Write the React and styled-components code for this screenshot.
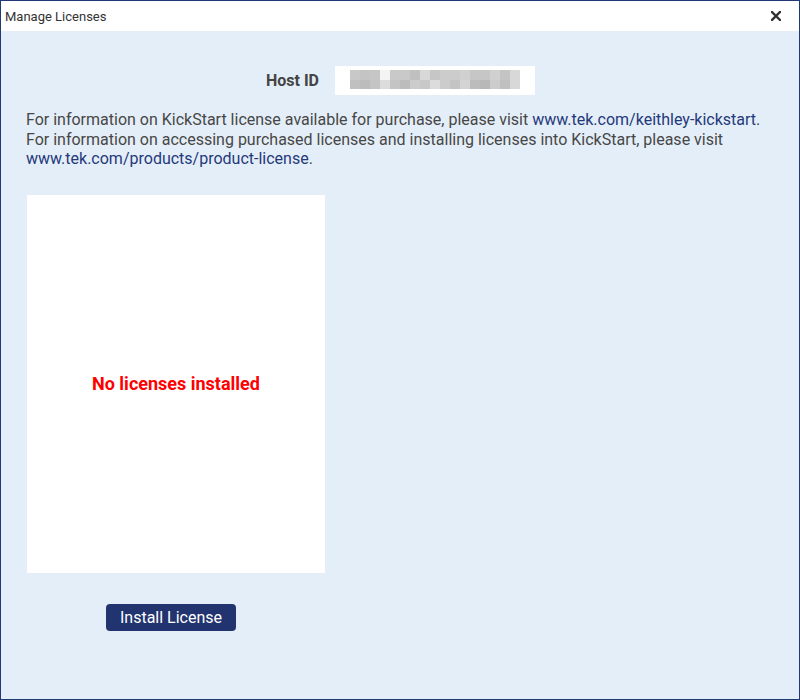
import React from 'react';
import styled, { createGlobalStyle } from 'styled-components';

const GlobalStyle = createGlobalStyle`
  html, body {
    margin: 0;
    padding: 0;
    background: #e4eef8;
  }
  * {
    box-sizing: border-box;
  }
`;

const Window = styled.div`
  width: 800px;
  height: 700px;
  border: 1px solid #203a78;
  display: flex;
  flex-direction: column;
  font-family: Roboto, 'Noto Sans', sans-serif;
  background: #e4eef8;
`;

const TitleBar = styled.div`
  height: 30px;
  flex: none;
  background: #ffffff;
  display: flex;
  align-items: center;
  justify-content: space-between;
  padding: 0 18px 0 4px;
`;

const Title = styled.span`
  font-size: 13px;
  color: #333333;
`;

const CloseButton = styled.button`
  border: 0;
  background: none;
  padding: 0;
  width: 10px;
  height: 10px;
  display: flex;
  cursor: pointer;
`;

const Body = styled.div`
  flex: 1;
  padding: 35px 25px 0 24px;
  display: flex;
  flex-direction: column;
`;

const HostRow = styled.div`
  display: flex;
  justify-content: center;
  align-items: center;
  gap: 16px;
  padding-left: 2px;
`;

const HostLabel = styled.span`
  font-size: 16px;
  font-weight: bold;
  color: #444444;
`;

const HostBox = styled.div`
  width: 200px;
  height: 29px;
  background: #ffffff;
  padding: 4px 0 0 15px;
`;

const Pixels = styled.div`
  display: grid;
  grid-template-columns: repeat(17, 10px);
  grid-auto-rows: 9.5px;
`;

const Pixel = styled.span`
  background: ${p => p.$shade};
`;

const Info = styled.p`
  margin: 15px 0 0 1px;
  font-size: 16px;
  line-height: 19.5px;
  color: #474747;
`;

const Link = styled.a`
  color: #24397a;
  text-decoration: none;
`;

const Column = styled.div`
  width: 298px;
  margin: 26px 0 0 2px;
  display: flex;
  flex-direction: column;
`;

const LicensePanel = styled.div`
  height: 378px;
  background: #ffffff;
  display: flex;
  align-items: center;
  justify-content: center;
`;

const Empty = styled.span`
  color: #ff0000;
  font-weight: bold;
  font-size: 18px;
`;

const InstallButton = styled.button`
  align-self: flex-start;
  margin: 31px 0 0 79px;
  width: 130px;
  height: 27px;
  border: 0;
  border-radius: 4px;
  background: #21346f;
  color: #ffffff;
  font-family: Roboto, 'Noto Sans', sans-serif;
  font-size: 16px;
  cursor: pointer;
`;

const shades = [
  'c8', 'c4', 'c6', 'f4', 'c9', 'c9', 'c0', 'd8', 'c6', 'cc', 'cc', 'd0', 'c6', 'c6', 'd0', 'c4', 'd8',
  'c0', 'bc', 'c4', 'dc', 'c4', 'bc', 'cc', 'c8', 'dc', 'cc', 'c4', 'd4', 'bc', 'b8', 'cc', 'c0', 'd8',
];

export default function App() {
  return (
    <>
      <GlobalStyle />
      <Window>
        <TitleBar>
          <Title>Manage Licenses</Title>
          <CloseButton aria-label="Close">
            <svg width="10" height="10" viewBox="0 0 10 10">
              <path d="M1 1 L9 9 M9 1 L1 9" stroke="#333" strokeWidth="2.4" strokeLinecap="square" />
            </svg>
          </CloseButton>
        </TitleBar>
        <Body>
          <HostRow>
            <HostLabel>Host ID</HostLabel>
            <HostBox>
              <Pixels>
                {shades.map((s, i) => (
                  <Pixel key={i} $shade={`#${s}${s}${s}`} />
                ))}
              </Pixels>
            </HostBox>
          </HostRow>
          <Info>
            For information on KickStart license available for purchase, please visit{' '}
            <Link href="#">www.tek.com/keithley-kickstart</Link>.
            <br />
            For information on accessing purchased licenses and installing licenses into KickStart, please visit{' '}
            <Link href="#">www.tek.com/products/product-license</Link>.
          </Info>
          <Column>
            <LicensePanel>
              <Empty>No licenses installed</Empty>
            </LicensePanel>
            <InstallButton>Install License</InstallButton>
          </Column>
        </Body>
      </Window>
    </>
  );
}
